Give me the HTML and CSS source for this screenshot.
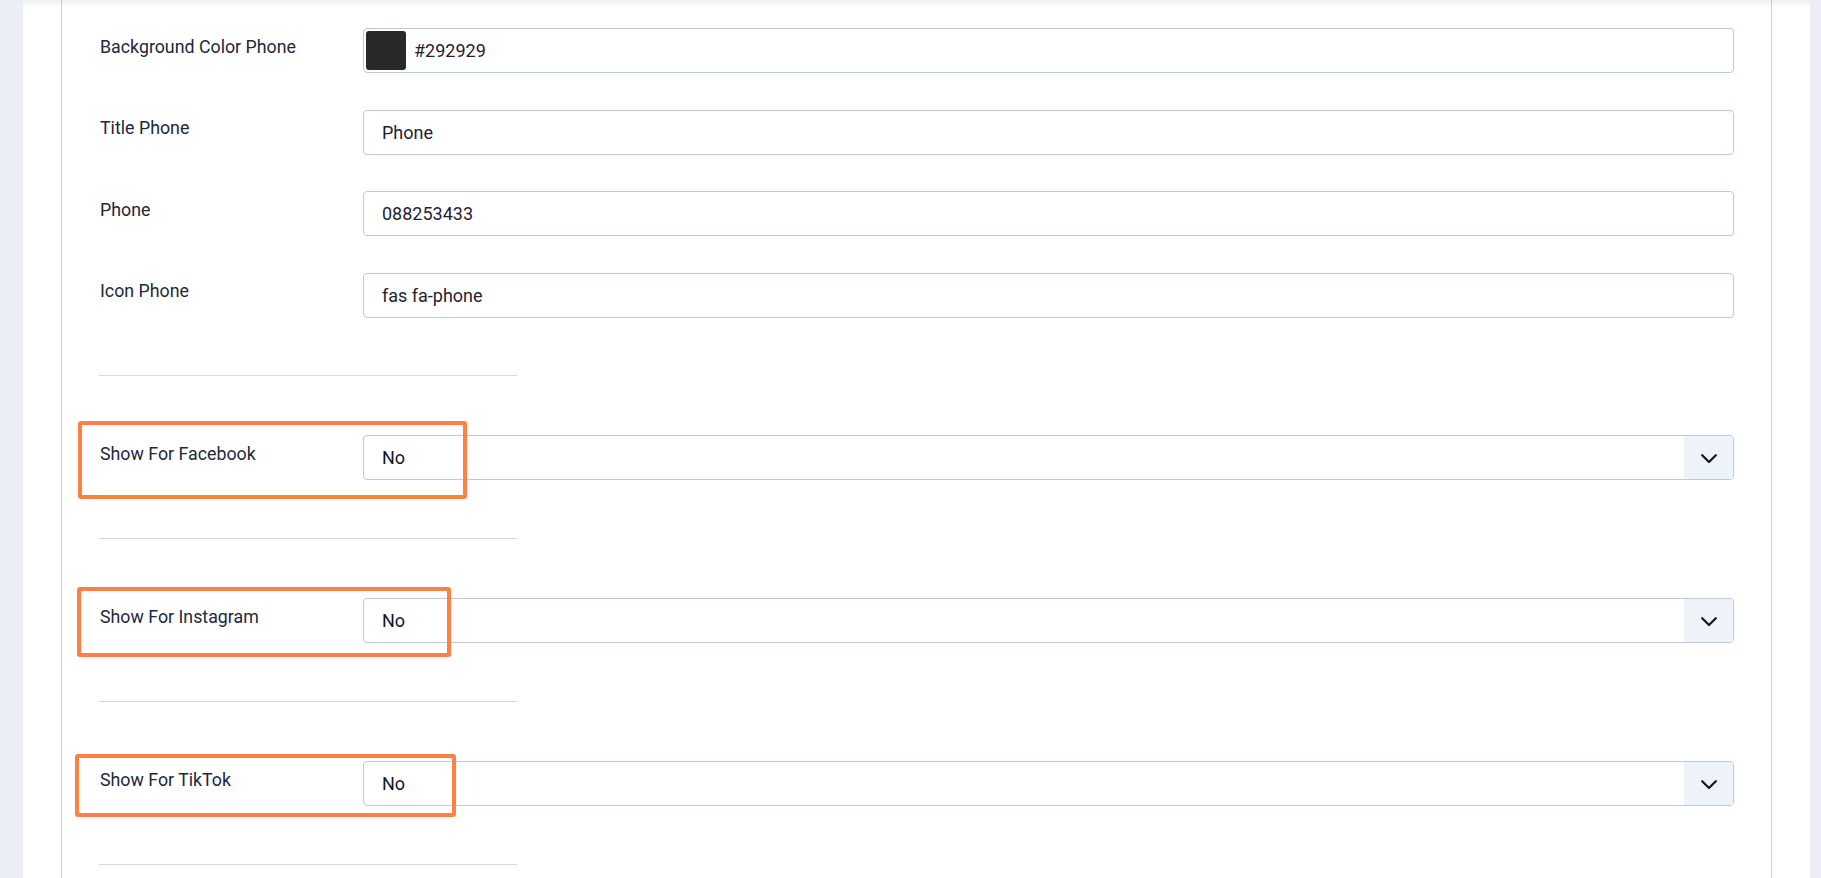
FILE: index.html
```html
<!DOCTYPE html>
<html lang="en">
<head>
<meta charset="utf-8">
<title>Module settings</title>
<link rel="stylesheet" href="styles.css">
</head>
<body>
<div class="page">
  <div class="panel">
    <div class="top-shadow"></div>
    <div class="fieldset">
      <div class="row">
        <label class="label">Background Color Phone</label>
        <div class="field color-field">
          <span class="swatch"></span>
          <span class="value">#292929</span>
        </div>
      </div>
      <div class="row">
        <label class="label">Title Phone</label>
        <div class="field"><span class="value">Phone</span></div>
      </div>
      <div class="row">
        <label class="label">Phone</label>
        <div class="field"><span class="value">088253433</span></div>
      </div>
      <div class="row">
        <label class="label">Icon Phone</label>
        <div class="field"><span class="value">fas fa-phone</span></div>
      </div>
      <div class="row spacer"><hr class="sep"></div>
      <div class="row">
        <label class="label">Show For Facebook</label>
        <div class="field select">
          <span class="value">No</span>
          <span class="arrow"><svg width="16" height="10" viewBox="0 0 16 10"><polyline points="1.2,1.2 8,8 14.8,1.2" fill="none" stroke="#161616" stroke-width="2.2" stroke-linecap="round" stroke-linejoin="round"/></svg></span>
        </div>
      </div>
      <div class="row spacer"><hr class="sep"></div>
      <div class="row">
        <label class="label">Show For Instagram</label>
        <div class="field select">
          <span class="value">No</span>
          <span class="arrow"><svg width="16" height="10" viewBox="0 0 16 10"><polyline points="1.2,1.2 8,8 14.8,1.2" fill="none" stroke="#161616" stroke-width="2.2" stroke-linecap="round" stroke-linejoin="round"/></svg></span>
        </div>
      </div>
      <div class="row spacer"><hr class="sep"></div>
      <div class="row">
        <label class="label">Show For TikTok</label>
        <div class="field select">
          <span class="value">No</span>
          <span class="arrow"><svg width="16" height="10" viewBox="0 0 16 10"><polyline points="1.2,1.2 8,8 14.8,1.2" fill="none" stroke="#161616" stroke-width="2.2" stroke-linecap="round" stroke-linejoin="round"/></svg></span>
        </div>
      </div>
      <div class="row spacer"><hr class="sep"></div>
    </div>
  </div>
  <div class="annot annot-1"></div>
  <div class="annot annot-2"></div>
  <div class="annot annot-3"></div>
</div>
</body>
</html>
```

FILE: styles.css
```css
html, body {
  margin: 0;
  height: 100%;
  overflow: hidden;
}

body {
  background: #ebeff5;
  font-family: Roboto, "Noto Sans", "Liberation Sans", sans-serif;
  color: #22283a;
}

.page {
  position: relative;
  height: 100%;
  padding: 0 11px 0 23px;
  box-sizing: border-box;
}

.panel {
  position: relative;
  height: 100%;
  background: #ffffff;
  padding: 0 38px;
  box-sizing: border-box;
}

.top-shadow {
  position: absolute;
  left: 0;
  right: 0;
  top: 0;
  height: 8px;
  background: linear-gradient(rgba(40, 50, 80, 0.075), rgba(40, 50, 80, 0));
  pointer-events: none;
}

.fieldset {
  height: 100%;
  border-left: 1px solid #c6d0de;
  border-right: 1px solid #c6d0de;
  padding: 28.3px 37px 0 37px;
  box-sizing: border-box;
}

.row {
  display: grid;
  grid-template-columns: 264px 1fr;
  height: 45px;
  margin-bottom: 36.44px;
}

.label {
  display: block;
  font-size: 17.8px;
  line-height: 27px;
  padding-top: 4.4px;
  padding-left: 1px;
  color: #22283a;
}

.field {
  display: flex;
  align-items: center;
  height: 45px;
  box-sizing: border-box;
  border: 1px solid #bccadf;
  border-radius: 4px;
  padding: 0 18px;
  font-size: 18px;
  line-height: 27px;
  color: #1f2330;
  background: #fff;
}

.color-field {
  padding-left: 2px;
}

.swatch {
  width: 40px;
  height: 39px;
  border-radius: 3px;
  background: #292929;
  margin-right: 8px;
  flex: none;
}

.select {
  padding-right: 0;
  overflow: hidden;
}

.select .value {
  flex: 1;
  color: #111827;
}

.arrow {
  width: 49px;
  height: 100%;
  background: #eef2f9;
  display: flex;
  align-items: center;
  justify-content: center;
  flex: none;
}

.arrow svg {
  display: block;
  margin-top: 2px;
}

.spacer {
  display: block;
  box-sizing: border-box;
  padding-top: 21.3px;
}

.sep {
  display: block;
  width: 418px;
  margin: 0;
  border: 0;
  border-top: 1px solid #d5dae2;
  height: 0;
}

.annot {
  position: absolute;
  box-sizing: border-box;
  border: 4.6px solid #ff8040;
  border-radius: 3px;
  pointer-events: none;
}

.annot-1 {
  left: 78.3px;
  top: 420.7px;
  width: 389px;
  height: 78.6px;
}

.annot-2 {
  left: 77.3px;
  top: 586.7px;
  width: 373.4px;
  height: 70.6px;
}

.annot-3 {
  left: 75.3px;
  top: 754.3px;
  width: 380.4px;
  height: 63px;
}
```
